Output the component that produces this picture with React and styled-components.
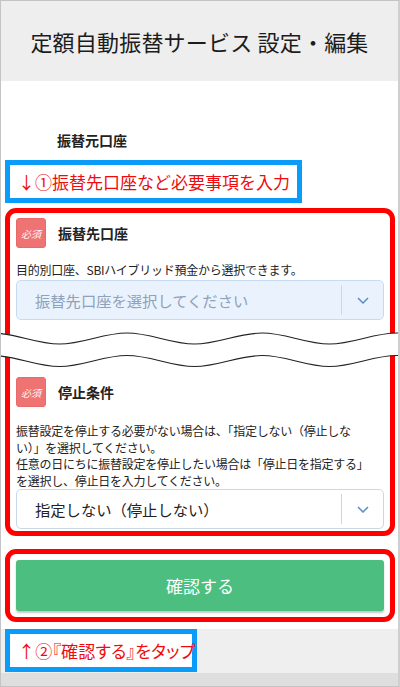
import React from "react";
import styled, { createGlobalStyle } from "styled-components";

const GlobalStyle = createGlobalStyle`
  body {
    margin: 0;
    font-family: "Noto Sans CJK JP", "Noto Sans", sans-serif;
    color: #222;
  }
`;

const Frame = styled.div`
  position: relative;
  width: 400px;
  height: 687px;
  box-sizing: border-box;
  border: 1px solid #c4c4c4;
  border-right: 2px solid #cfcfcf;
  display: flex;
  flex-direction: column;
  background: #fff;
  overflow: hidden;
`;

const Header = styled.header`
  height: 80px;
  flex-shrink: 0;
  background: #eeeeee;
  display: flex;
  align-items: center;
  justify-content: center;
  font-size: 22px;
  color: #1c1c1c;
  letter-spacing: 0.2px;
`;

const Content = styled.main`
  flex: 1;
  padding-top: 49px;
`;

const SourceLabel = styled.div`
  margin-left: 56px;
  font-size: 14px;
  font-weight: 700;
  line-height: 20px;
`;

const Note = styled.div`
  box-sizing: border-box;
  height: 43px;
  width: ${(p) => p.width}px;
  margin: ${(p) => p.margin};
  border: 5px solid #0a9cf8;
  background: #fff;
  color: #ee0c0c;
  font-size: 17px;
  line-height: 33px;
  padding-left: 8px;
  white-space: nowrap;
  font-feature-settings: ${(p) => (p.tight ? '"palt"' : "normal")};
  letter-spacing: ${(p) => (p.tight ? "0.2px" : "0")};
`;

const RedBox = styled.section`
  position: relative;
  box-sizing: border-box;
  width: 390px;
  margin: ${(p) => p.margin};
  border: 5px solid #ff0000;
  border-radius: 11px;
  padding: ${(p) => p.pad};
`;

const FieldHead = styled.div`
  display: flex;
  align-items: center;
  gap: 12px;
  height: 30px;
`;

const Badge = styled.span`
  width: 30px;
  height: 30px;
  box-sizing: border-box;
  border-radius: 3px;
  background: #f07373;
  border: 1px solid #ea6a6a;
  color: rgba(255, 255, 255, 0.95);
  font-size: 10px;
  display: flex;
  align-items: center;
  justify-content: center;
  font-style: italic;
`;

const FieldTitle = styled.span`
  font-size: 14px;
  font-weight: 700;
`;

const Desc = styled.p`
  margin: ${(p) => p.margin};
  font-size: 12px;
  line-height: 16.5px;
  letter-spacing: -0.25px;
  color: #222;
  white-space: nowrap;
`;

const Select = styled.div`
  box-sizing: border-box;
  height: 40px;
  display: flex;
  align-items: center;
  border: 1px solid ${(p) => (p.empty ? "#c6dbf1" : "#c9d8e8")};
  background: ${(p) => (p.empty ? "#eaf3fd" : "#fff")};
  border-radius: 5px;
`;

const SelectText = styled.span`
  flex: 1;
  padding-left: 18px;
  font-size: 15.3px;
  color: ${(p) => (p.empty ? "#8ea2b9" : "#222")};
`;

const SelectArrow = styled.span`
  width: 41px;
  height: 30px;
  border-left: 1px solid #c6d8ec;
  display: flex;
  align-items: center;
  justify-content: center;
`;

const Gap = styled.div`
  height: 57px;
`;

const Wave = styled.svg`
  position: absolute;
  left: -10px;
  top: 113px;
  display: block;
`;

const ConfirmButton = styled.button`
  width: 100%;
  height: 51px;
  border: none;
  border-radius: 3px;
  background: #4cbf80;
  color: #fff;
  font-family: inherit;
  font-size: 17px;
  box-shadow: 0 2px 2px rgba(0, 0, 0, 0.22);
`;

const Footer = styled.footer`
  height: 44px;
  flex-shrink: 0;
  background: #efefef;
`;

const BottomBar = styled.div`
  height: 13px;
  flex-shrink: 0;
  background: #dedede;
`;

const ScrollThumb = styled.div`
  position: absolute;
  right: -2px;
  top: 444px;
  bottom: 0;
  width: 2px;
  background: #7d7d7d;
`;

function wavePath(y0, amp, start, period, end) {
  const h = period / 2;
  let x = start;
  let up = true;
  let d = `M${x} ${y0 - amp}`;
  while (x < end) {
    const y1 = up ? y0 - amp : y0 + amp;
    const y2 = up ? y0 + amp : y0 - amp;
    d += ` C${x + h * 0.36} ${y1} ${x + h * 0.64} ${y2} ${x + h} ${y2}`;
    x += h;
    up = !up;
  }
  return d;
}

function Chevron() {
  return (
    <svg width="12" height="7" viewBox="0 0 12 7">
      <path d="M1 1 L6 6 L11 1" fill="none" stroke="#5b8dc8" strokeWidth="1.5" />
    </svg>
  );
}

function BreakWave() {
  const top = wavePath(12.5, 5.5, -8, 135, 420);
  const bottom = wavePath(35, 5.5, -8, 135, 420);
  // white band between the two wavy lines
  const bottomBack = (() => {
    const h = 135 / 2;
    const pts = [];
    let x = -8;
    let up = true;
    while (x < 420) {
      pts.push([x, up]);
      x += h;
      up = !up;
    }
    let d = ` L${x} ${up ? 35 - 5.5 : 35 + 5.5}`;
    for (let i = pts.length - 1; i >= 0; i--) {
      const [px, pu] = pts[i];
      const yEnd = pu ? 35 - 5.5 : 35 + 5.5;
      const yStart = pu ? 35 + 5.5 : 35 - 5.5;
      d += ` C${px + h * 0.64} ${yStart} ${px + h * 0.36} ${yEnd} ${px} ${yEnd}`;
    }
    return d + " Z";
  })();
  return (
    <Wave width="400" height="48" viewBox="0 0 400 48">
      <path d={top + bottomBack} fill="#fff" />
      <path d={top} fill="none" stroke="#222" strokeWidth="1.2" />
      <path d={bottom} fill="none" stroke="#222" strokeWidth="1.2" />
    </Wave>
  );
}

export default function App() {
  return (
    <>
      <GlobalStyle />
      <Frame>
        <Header>定額自動振替サービス 設定・編集</Header>
        <Content>
          <SourceLabel>振替元口座</SourceLabel>
          <Note width={297} margin="10px 0 0 4px">
            ↓①振替先口座など必要事項を入力
          </Note>
          <RedBox margin="5px 0 0 4px" pad="5px 6px 2px">
            <FieldHead>
              <Badge>必須</Badge>
              <FieldTitle>振替先口座</FieldTitle>
            </FieldHead>
            <Desc margin="14px 0 1.5px">
              目的別口座、SBIハイブリッド預金から選択できます。
            </Desc>
            <Select empty>
              <SelectText empty>振替先口座を選択してください</SelectText>
              <SelectArrow>
                <Chevron />
              </SelectArrow>
            </Select>
            <Gap />
            <FieldHead>
              <Badge>必須</Badge>
              <FieldTitle>停止条件</FieldTitle>
            </FieldHead>
            <Desc margin="16px 0 0">
              振替設定を停止する必要がない場合は、「指定しない（停止しな
              <br />
              い）」を選択してください。
              <br />
              任意の日にちに振替設定を停止したい場合は「停止日を指定する」
              <br />
              を選択し、停止日を入力してください。
            </Desc>
            <Select>
              <SelectText>指定しない（停止しない）</SelectText>
              <SelectArrow>
                <Chevron />
              </SelectArrow>
            </Select>
            <BreakWave />
          </RedBox>
          <RedBox margin="13px 0 0 4px" pad="6px 6px">
            <ConfirmButton>確認する</ConfirmButton>
          </RedBox>
        </Content>
        <Footer>
          <Note width={192} tight margin="0 0 0 4px">
            ↑②『確認する』をタップ
          </Note>
        </Footer>
        <BottomBar />
        <ScrollThumb />
      </Frame>
    </>
  );
}
